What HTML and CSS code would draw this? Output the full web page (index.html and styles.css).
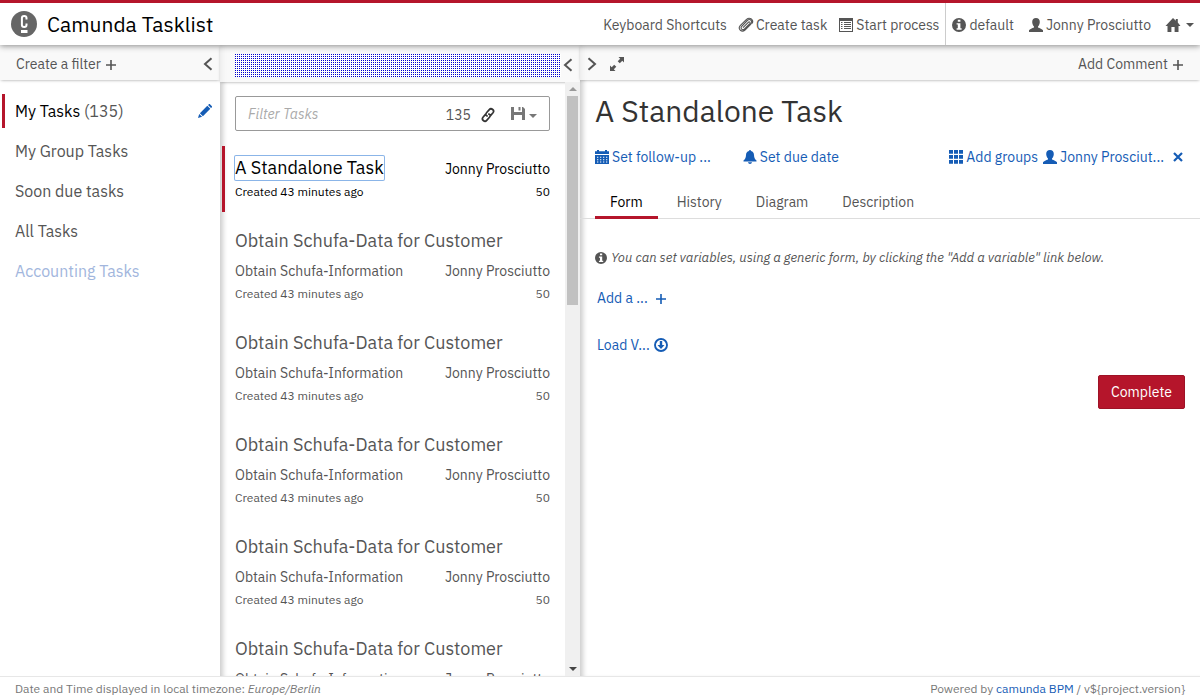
FILE: index.html
```html
<!DOCTYPE html>
<html lang="en">
<head>
<meta charset="utf-8">
<title>Camunda Tasklist</title>
<link rel="stylesheet" href="styles.css">
</head>
<body>
<svg class="sprite" aria-hidden="true">
  <symbol id="plus" viewBox="0 0 14 14"><path d="M7 3v10M2 8h10" stroke="currentColor" stroke-width="1.6" fill="none"/></symbol>
  <symbol id="left" viewBox="0 0 14 14"><path d="M10.5 1.2 4 7l6.500 5.800" stroke="currentColor" stroke-width="2" fill="none"/></symbol>
  <symbol id="right" viewBox="0 0 14 14"><path d="M3.500 1.200 10 7l-6.500 5.800" stroke="currentColor" stroke-width="2" fill="none"/></symbol>
  <symbol id="expand" viewBox="0 0 14 14"><path d="M8.500 0H14v5.500l-1.700-1.700-2.500 2.500-2.100-2.100 2.500-2.500zM0 14V8.500l1.700 1.700 2.500-2.500 2.100 2.100-2.500 2.500L5.500 14z"/></symbol>
  <symbol id="pencil" viewBox="0 0 14 14"><path d="M0 14l1.200-4 2.900 2.800zM1.900 9.200 9.300 1.800l3 3-7.400 7.400zM10 1.100l.7-.7c.5-.5 1-.5 1.500 0l1.500 1.500c.5.5.5 1 0 1.500l-.7.700z"/></symbol>
  <symbol id="clip" viewBox="0 0 14 14" overflow="visible"><path d="M4 9.600 9.300 4.300c1-1 2.500.3 1.500 1.400L5.500 11c-2.100 2-4.700-.7-2.800-2.700L8.300 2.500c2.700-2.500 6 .8 3.600 3.500L6 12c-3.200 2.900-7.600-.9-4.800-4.300L7.500 1.400c1.500-1.300 3-1.500 4.500-.6 1.800 1.200 2 3.200 1.200 4.700" stroke="currentColor" stroke-width="1.100" fill="none"/></symbol>
  <symbol id="list" viewBox="0 0 14 14"><path fill-rule="evenodd" d="M0 0h14v14H0zM1 3v10h12V3z"/><path d="M2 4.500h1.500M2 6.500h1.500M2 8.500h1.500M2 10.500h1.500M5 4.500h7M5 6.500h7M5 8.500h7M5 10.500h7" stroke="currentColor" stroke-width="1"/></symbol>
  <symbol id="info" viewBox="0 0 14 14"><path fill-rule="evenodd" d="M7 0a7 7 0 1 1 0 14A7 7 0 0 1 7 0zM5.800 1.800v2h2.600v-2zM4.600 5.200v1.400h1.200v3.600H4.600v1.500h5v-1.500H8.400v-5z"/></symbol>
  <symbol id="user" viewBox="0 0 14 14"><path d="M7 0c2.400 0 3.800 1.500 3.800 3.900 0 1.800-.8 3.600-1.800 4.600v1.100c1.800.8 4.200 1.600 5 2.600.2.400.2 1 .2 1.800H-.2c0-.800 0-1.400.2-1.800.8-1 3.200-1.800 5-2.600V8.500c-1-1-1.800-2.800-1.800-4.600C3.200 1.500 4.600 0 7 0z"/></symbol>
  <symbol id="home" viewBox="0 0 14 14" overflow="visible"><path d="M7 0l2.800 2.700V1h2v3.600L14.500 8h-2v6H8.600V9H5.400v5H1.500V8H-.5z"/></symbol>
  <symbol id="caret" viewBox="0 0 8 8"><path d="M0 2h8L4 6z"/></symbol>
  <symbol id="link" viewBox="0 0 14 14" overflow="visible"><path d="M5.300 7.800C4.500 6.800 4.700 5.600 5.500 4.700L8.300 1.600c1-1.100 2.300-1 3.400-.1 1.200 1 1.200 2.200.3 3.300L9.300 7.900M8.700 6.200c.8 1 .6 2.200-.2 3.100l-2.800 3.100c-1 1.100-2.300 1-3.400.1-1.200-1-1.200-2.200-.3-3.300L4.700 6.100M5.300 7.800 6.900 8M8.700 6.200 7.100 6" stroke="currentColor" stroke-width="1.700" fill="none"/></symbol>
  <symbol id="save" viewBox="0 0 14 14"><path fill-rule="evenodd" d="M0 0h3v5h8V0h1l2 2v11h-3V8H3v5H0zM7.500 0h2v3.500h-2z"/></symbol>
  <symbol id="calendar" viewBox="0 0 14 14"><path d="M0 1.200h2V0h2v1.200h6V0h2v1.200h2V4H0z"/><path fill-rule="evenodd" d="M0 5h14v9H0zM2 6.800v1h1.300v-1zm3 0v1h1.300v-1zm3 0v1h1.300v-1zm3 0v1h1.300v-1zM2 9.200v1h1.300v-1zm3 0v1h1.300v-1zm3 0v1h1.300v-1zm3 0v1h1.300v-1zM2 11.600v1h1.300v-1zm3 0v1h1.300v-1zm3 0v1h1.300v-1zm3 0v1h1.300v-1z"/></symbol>
  <symbol id="bell" viewBox="0 0 14 14"><path d="M6 1a1 1 0 0 1 2 0c2 .4 2.900 2 3 4 .1 2.800.8 4.200 2.500 5.500v.9H.5v-.9C2.200 9.200 2.900 7.800 3 5c.1-2 1-3.600 3-4zM5 12.300h4C8.600 14.400 5.400 14.400 5 12.300z"/></symbol>
  <symbol id="grid" viewBox="0 0 14 14"><path d="M0 0h4v3.700H0zM5 0h4v3.700H5zM10 0h4v3.700h-4zM0 5h4v3.700H0zM5 5h4v3.700H5zM10 5h4v3.700h-4zM0 10h4v3.700H0zM5 10h4v3.700H5zM10 10h4v3.700h-4z"/></symbol>
  <symbol id="cross" viewBox="0 0 14 14"><path d="M3 3l8 8M11 3l-8 8" stroke="currentColor" stroke-width="2.200"/></symbol>
  <symbol id="download" viewBox="0 0 14 14"><circle cx="7" cy="7" r="6" fill="none" stroke="currentColor" stroke-width="1.900"/><path d="M5.800 3h2.400v4h2.300L7 11 3.500 7h2.300z"/></symbol>
  <symbol id="logo" viewBox="0 0 26 26"><circle cx="13" cy="13" r="13" fill="#666"/><path d="M15.500 8.500V7c0-1.300-.8-2-2.300-2s-2.300.7-2.300 2v7c0 1.300.8 2 2.300 2s2.300-.7 2.300-2v-1.500" fill="none" stroke="#fff" stroke-width="2"/><path d="M10 19h6.500v3H10z" fill="#fff"/></symbol>
</svg>

<header class="header">
  <a class="brand" href="#"><svg class="logo"><use href="#logo"/></svg>Camunda Tasklist</a>
  <nav class="menu">
    <a href="#">Keyboard Shortcuts</a>
    <a href="#"><svg class="icon"><use href="#clip"/></svg>Create task</a>
    <a href="#"><svg class="icon"><use href="#list"/></svg>Start process</a>
    <div class="account">
      <a href="#"><svg class="icon"><use href="#info"/></svg>default</a>
      <a href="#"><svg class="icon"><use href="#user"/></svg>Jonny Prosciutto</a>
      <a href="#" aria-label="Home"><svg class="icon home"><use href="#home"/></svg><svg class="caret"><use href="#caret"/></svg></a>
    </div>
  </nav>
</header>

<main class="columns">
  <section class="filters">
    <div class="toolbar">
      <button class="plain">Create a filter <svg class="icon"><use href="#plus"/></svg></button>
      <button class="plain chevron" aria-label="Collapse filters"><svg class="icon"><use href="#left"/></svg></button>
    </div>
    <ul class="filter-list">
      <li class="active"><a href="#">My Tasks <span class="count">(135)</span></a><button class="plain edit" aria-label="Edit filter"><svg class="icon"><use href="#pencil"/></svg></button></li>
      <li><a href="#">My Group Tasks</a></li>
      <li><a href="#">Soon due tasks</a></li>
      <li><a href="#">All Tasks</a></li>
      <li><a class="accounting" href="#">Accounting Tasks</a></li>
    </ul>
  </section>

  <section class="tasks">
    <div class="toolbar">
      <div class="dots"></div>
      <button class="plain chevron" aria-label="Collapse tasks"><svg class="icon"><use href="#left"/></svg></button>
    </div>
    <div class="scroll">
      <div class="task-list">
        <div class="search">
          <input type="text" placeholder="Filter Tasks" aria-label="Filter Tasks">
          <span class="total">135</span>
          <button class="plain link" aria-label="Copy link"><svg class="icon"><use href="#link"/></svg></button>
          <button class="plain save" aria-label="Save search"><svg class="icon"><use href="#save"/></svg><svg class="caret"><use href="#caret"/></svg></button>
        </div>
        <article class="task selected">
          <div class="row"><h2><a href="#">A Standalone Task</a></h2><span>Jonny Prosciutto</span></div>
          <div class="row small"><span>Created 43 minutes ago</span><span>50</span></div>
        </article>
        <article class="task">
          <h2><a href="#">Obtain Schufa-Data for Customer</a></h2>
          <div class="row"><span>Obtain Schufa-Information</span><span>Jonny Prosciutto</span></div>
          <div class="row small"><span>Created 43 minutes ago</span><span>50</span></div>
        </article>
        <article class="task">
          <h2><a href="#">Obtain Schufa-Data for Customer</a></h2>
          <div class="row"><span>Obtain Schufa-Information</span><span>Jonny Prosciutto</span></div>
          <div class="row small"><span>Created 43 minutes ago</span><span>50</span></div>
        </article>
        <article class="task">
          <h2><a href="#">Obtain Schufa-Data for Customer</a></h2>
          <div class="row"><span>Obtain Schufa-Information</span><span>Jonny Prosciutto</span></div>
          <div class="row small"><span>Created 43 minutes ago</span><span>50</span></div>
        </article>
        <article class="task">
          <h2><a href="#">Obtain Schufa-Data for Customer</a></h2>
          <div class="row"><span>Obtain Schufa-Information</span><span>Jonny Prosciutto</span></div>
          <div class="row small"><span>Created 43 minutes ago</span><span>50</span></div>
        </article>
        <article class="task">
          <h2><a href="#">Obtain Schufa-Data for Customer</a></h2>
          <div class="row"><span>Obtain Schufa-Information</span><span>Jonny Prosciutto</span></div>
        </article>
      </div>
      <div class="scrollbar" aria-hidden="true">
        <span class="arrow up"></span>
        <span class="track"><span class="thumb"></span></span>
        <span class="arrow down"></span>
      </div>
    </div>
  </section>

  <section class="detail">
    <div class="toolbar">
      <button class="plain" aria-label="Expand"><svg class="icon"><use href="#right"/></svg></button>
      <button class="plain expand" aria-label="Maximize"><svg class="icon"><use href="#expand"/></svg></button>
      <button class="plain comment">Add Comment <svg class="icon"><use href="#plus"/></svg></button>
    </div>
    <h1>A Standalone Task</h1>
    <div class="meta">
      <button class="plain followup"><svg class="icon"><use href="#calendar"/></svg>Set follow-up ...</button>
      <button class="plain"><svg class="icon"><use href="#bell"/></svg>Set due date</button>
      <div class="people">
        <button class="plain"><svg class="icon"><use href="#grid"/></svg>Add groups</button>
        <button class="plain"><svg class="icon"><use href="#user"/></svg>Jonny Prosciut...</button>
        <button class="plain remove" aria-label="Remove assignee"><svg class="icon"><use href="#cross"/></svg></button>
      </div>
    </div>
    <nav class="tabs">
      <a class="current" href="#">Form</a>
      <a href="#">History</a>
      <a href="#">Diagram</a>
      <a href="#">Description</a>
    </nav>
    <div class="form">
      <p class="hint"><svg class="icon"><use href="#info"/></svg>You can set variables, using a generic form, by clicking the "Add a variable" link below.</p>
      <button class="plain action"><span>Add a ...</span><svg class="icon"><use href="#plus"/></svg></button>
      <button class="plain action"><span>Load V...</span><svg class="icon"><use href="#download"/></svg></button>
      <button class="complete">Complete</button>
    </div>
  </section>
</main>

<footer class="footer">
  <span>Date and Time displayed in local timezone: <em>Europe/Berlin</em></span>
  <span>Powered by <a href="#">camunda BPM</a> / v${project.version}</span>
</footer>
</body>
</html>
```
FILE: styles.css
```css
* { box-sizing: border-box; }
body {
  margin: 0;
  height: 100vh;
  display: flex;
  flex-direction: column;
  overflow: hidden;
  background: #fff;
  color: #555;
  font: 14px/20px "IBM Plex Sans", Roboto, sans-serif;
}
a { color: inherit; text-decoration: none; }
h1, h2, p, ul { margin: 0; padding: 0; font-weight: 400; }
.sprite { display: none; }
.icon { width: 14px; height: 14px; flex: none; fill: currentColor; overflow: visible; }
.caret { width: 8px; height: 8px; fill: currentColor; }
.plain {
  display: inline-flex;
  align-items: center;
  gap: 4px;
  padding: 0;
  border: 0;
  background: none;
  color: inherit;
  font: inherit;
  white-space: nowrap;
}

.header {
  display: flex;
  justify-content: space-between;
  height: 45px;
  flex: none;
  border-top: 3px solid #b5152b;
  background: #fff;
  box-shadow: 0 1px 6px rgba(0, 0, 0, .45);
  z-index: 2;
}
.brand {
  display: flex;
  align-items: center;
  gap: 10px;
  padding-left: 11px;
  color: #000;
  font-size: 21px;
}
.logo { width: 26px; height: 26px; }
.menu { display: flex; align-items: stretch; gap: 12px; padding-right: 6px; }
.menu a { display: flex; align-items: center; gap: 3px; padding-top: 2px; }
.account { display: flex; gap: 15px; padding-left: 6px; margin-left: -6px; border-left: 1px solid #ccc; }
.home { margin-right: 3px; }

.columns { flex: 1; min-height: 0; display: grid; grid-template-columns: 220px 360px 1fr; }
.columns > section { min-width: 0; min-height: 0; display: flex; flex-direction: column; }
.tasks, .detail { box-shadow: inset 6px 0 5px -3px rgba(0, 0, 0, .2); }
.toolbar {
  display: flex;
  align-items: center;
  flex: none;
  height: 35px;
  padding: 3px 15px 0 16px;
  background: rgba(247, 247, 247, .8);
  box-shadow: 0 1px 3px -1px rgba(0, 0, 0, .4);
}
.toolbar .plain { gap: 3px; }
.filters .toolbar { justify-content: space-between; padding-right: 5px; }
.tasks .toolbar { height: 37px; padding: 3px 5px 0 15px; }
.detail .toolbar { padding-left: 5px; }
.dots {
  flex: 1;
  height: 23px;
  background:
    linear-gradient(90deg, transparent 1px, #fff 1px) 0 0 / 2px 2px,
    linear-gradient(transparent 1px, #fff 1px) 0 0 / 2px 2px,
    #00c;
}
.expand { margin-left: 11px; }
.comment { margin-left: auto; }

.filter-list { display: flex; flex-direction: column; gap: 6px; padding: 14px 0 0 2px; list-style: none; font-size: 16px; }
.filter-list li {
  display: flex;
  justify-content: space-between;
  align-items: center;
  height: 34px;
  padding: 0 8px 0 10px;
  border-left: 3px solid transparent;
}
.filter-list .active { border-color: #b5152b; color: #000; }
.count { color: #555; }
.edit { color: #155cb5; }
.accounting { color: #a2b6dd; }

.scroll { flex: 1; min-height: 0; display: flex; }
.task-list { flex: 1; min-width: 0; overflow: hidden; padding: 14px 15px 0 2px; }
.search {
  display: flex;
  align-items: center;
  height: 35px;
  margin: 0 0 15px 13px;
  padding: 0 12px;
  border: 1px solid #999;
  border-radius: 2px;
}
.search input { flex: 1; min-width: 0; padding: 0; border: 0; outline: 0; background: none; font: inherit; }
.search input::placeholder { color: #aaa; font-style: italic; opacity: 1; }
.total { font-size: 14px; padding-top: 3px; }
.link { margin: 3px 16px 0 10px; color: #333; }
.save { color: #777; }
.save .caret { margin-top: 5px; }
.task { padding: 8px 0 10px 10px; margin-bottom: 7px; border-left: 3px solid transparent; }
.task h2 { font-size: 18px; line-height: 27px; }
.task .row { display: flex; justify-content: space-between; align-items: center; line-height: 34px; }
.task .small { font-size: 12px; line-height: 20px; margin-top: -4px; }
.task.selected { padding-top: 10px; border-color: #b5152b; color: #000; }
.selected h2 a { display: block; line-height: 24px; border-radius: 1px; box-shadow: 0 0 0 1px #8bb5e8; }
.selected .row { align-items: flex-end; line-height: 22px; }
.selected .small { margin-top: 2px; line-height: 20px; }
.scrollbar { display: flex; flex-direction: column; align-items: center; width: 15px; background: #f0f0f0; }
.track { flex: 1; width: 11px; }
.thumb { display: block; height: 37%; background: #c1c1c1; }
.arrow { height: 14px; display: flex; align-items: center; }
.arrow::before { content: ""; border: 4px solid transparent; }
.up::before { border-top: 0; border-bottom-color: #999; }
.down::before { border-bottom: 0; border-top-color: #444; }

.detail h1 { margin: 14px 0 0 15px; color: #333; font-size: 30px; line-height: 33px; }
.meta { display: flex; gap: 32px; margin: 20px 15px 0 15px; color: #155cb5; }
.meta .plain { gap: 3px; }
.people { display: flex; gap: 5px; margin-left: auto; }
.remove { margin-left: 2px; }
.tabs { display: flex; margin-top: 20px; padding-left: 15px; border-bottom: 1px solid #ddd; }
.tabs a { padding: 5px 15px 4px; margin: 0 4px -1px 0; border-bottom: 3px solid transparent; }
.tabs .current { color: #000; border-color: #b5152b; }
.form { display: flex; flex-direction: column; align-items: flex-start; padding: 29px 15px 0 15px; }
.hint { display: flex; align-items: center; gap: 4px; font-size: 13px; font-style: italic; }
.hint .icon { width: 12px; height: 12px; }
.action { margin: 20px 0 7px 2px; color: #155cb5; }
.action span { width: 53px; text-align: left; }
.complete {
  align-self: flex-end;
  height: 34px;
  margin-top: 13px;
  padding: 0 12px;
  border: 1px solid #9e1226;
  border-radius: 2px;
  background: #b5152b;
  color: #fff;
  font: inherit;
}

.footer {
  display: flex;
  justify-content: space-between;
  height: 24px;
  flex: none;
  padding: 2px 15px 0;
  border-top: 1px solid #e7e7e7;
  background: #fff;
  color: #777;
  font-size: 12px;
}
.footer a { color: #155cb5; }
```
